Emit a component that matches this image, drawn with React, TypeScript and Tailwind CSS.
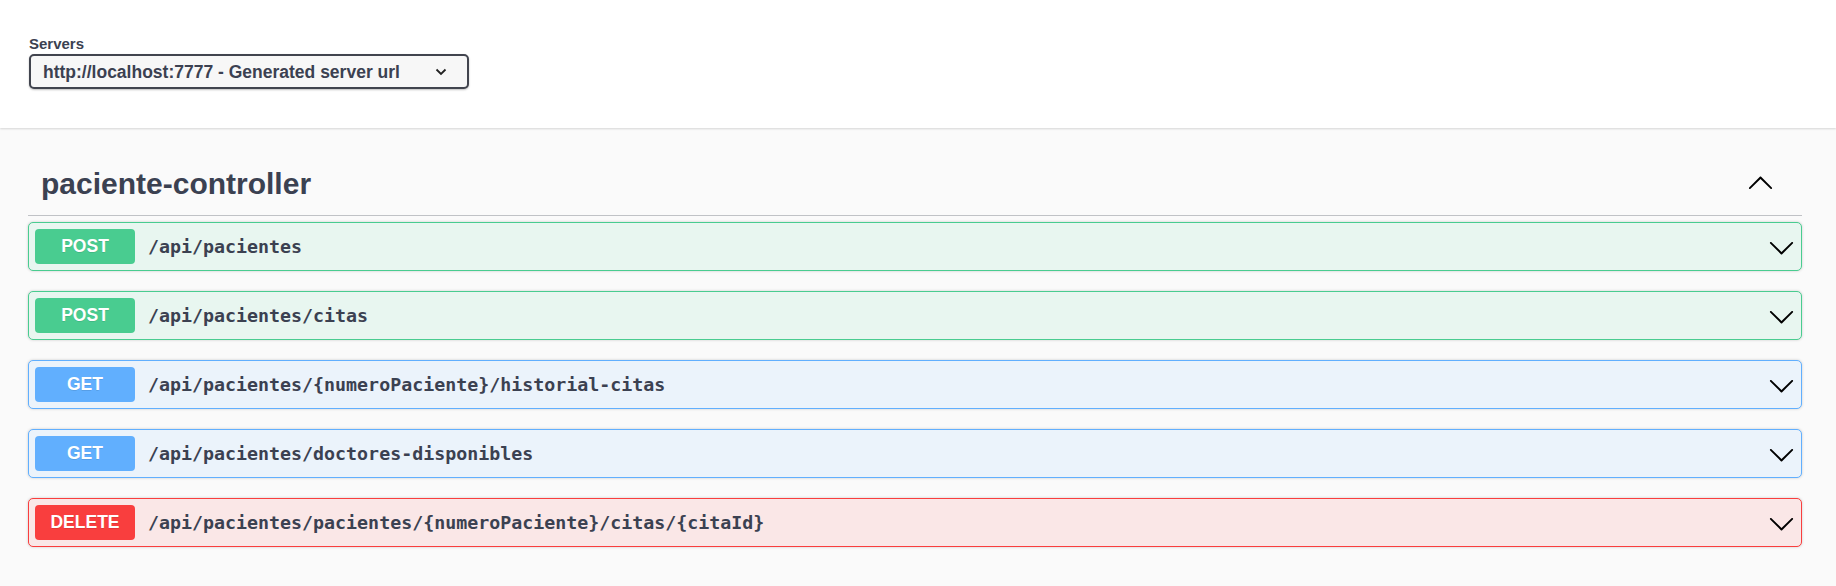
import React from "react";

const ARROW =
  "M17.418 6.109c.272-.268.709-.268.979 0s.271.701 0 .969l-7.908 7.83c-.27.268-.707.268-.979 0l-7.908-7.83c-.27-.268-.27-.701 0-.969.271-.268.709-.268.979 0L10 13.25l7.418-7.141z";

function Chevron({ up = false }: { up?: boolean }) {
  return (
    <svg
      width="27"
      height="27"
      viewBox="0 0 20 20"
      className={up ? "block rotate-180" : "block"}
      fill="#000"
    >
      <path d={ARROW} />
    </svg>
  );
}

type Op = {
  method: string;
  path: string;
  border: string;
  bg: string;
  badge: string;
};

const ops: Op[] = [
  { method: "POST", path: "/api/pacientes", border: "border-[#49cc90]", bg: "bg-[#e8f6f0]", badge: "bg-[#49cc90]" },
  { method: "POST", path: "/api/pacientes/citas", border: "border-[#49cc90]", bg: "bg-[#e8f6f0]", badge: "bg-[#49cc90]" },
  { method: "GET", path: "/api/pacientes/{numeroPaciente}/historial-citas", border: "border-[#61affe]", bg: "bg-[#ebf3fb]", badge: "bg-[#61affe]" },
  { method: "GET", path: "/api/pacientes/doctores-disponibles", border: "border-[#61affe]", bg: "bg-[#ebf3fb]", badge: "bg-[#61affe]" },
  { method: "DELETE", path: "/api/pacientes/pacientes/{numeroPaciente}/citas/{citaId}", border: "border-[#f93e3e]", bg: "bg-[#fae7e7]", badge: "bg-[#f93e3e]" },
];

export default function App() {
  return (
    <div className="h-[586px] w-full overflow-hidden bg-[#fafafa] font-['Liberation_Sans',Arial,sans-serif] text-[#3b4151]">
      <div className="bg-white pt-[35px] pb-[39px] shadow-[0_1px_2px_0_rgba(0,0,0,0.15)]">
        <div className="pl-[29px] pr-[34px]">
          <div className="text-[15px] font-bold leading-[17px]">Servers</div>
          <div className="mt-[2px] flex h-[35px] w-[440px] items-center justify-between rounded-[5px] border-[2px] border-[#41444e] bg-[#f7f7f7] pl-[12px] pr-[20px] shadow-[0_1px_2px_0_rgba(0,0,0,0.25)]">
            <span className="text-[17.5px] font-bold leading-[20px]">
              http://localhost:7777 - Generated server url
            </span>
            <svg width="12" height="8" viewBox="0 0 12 8">
              <polyline points="1.5,1.5 6,6 10.5,1.5" fill="none" stroke="#222" strokeWidth="1.8" />
            </svg>
          </div>
        </div>
      </div>

      <div className="mt-[25px] pl-[28px] pr-[34px]">
        <div className="flex items-center justify-between border-b border-[rgba(59,65,81,0.3)] pt-[12px] pb-[13px] pl-[13px] pr-[28px]">
          <h3 className="text-[30px] font-bold leading-[37px]">paciente-controller</h3>
          <Chevron up />
        </div>
        <div className="mt-[6px] flex flex-col gap-[20px]">
          {ops.map((op, i) => (
            <div
              key={i}
              className={`flex h-[49px] items-center rounded-[5px] border px-[6px] shadow-[0_0_3px_rgba(0,0,0,0.19)] ${op.border} ${op.bg}`}
            >
              <div
                className={`flex h-[35px] w-[100px] items-center justify-center rounded-[4px] text-[17.5px] font-bold text-white [text-shadow:0_1px_0_rgba(0,0,0,0.1)] ${op.badge}`}
              >
                {op.method}
              </div>
              <div className="ml-[13px] font-['DejaVu_Sans_Mono',monospace] text-[18.3px] font-bold text-[#3b4151]">
                {op.path}
              </div>
              <div className="ml-auto mt-[1px]">
                <Chevron />
              </div>
            </div>
          ))}
        </div>
      </div>
    </div>
  );
}
